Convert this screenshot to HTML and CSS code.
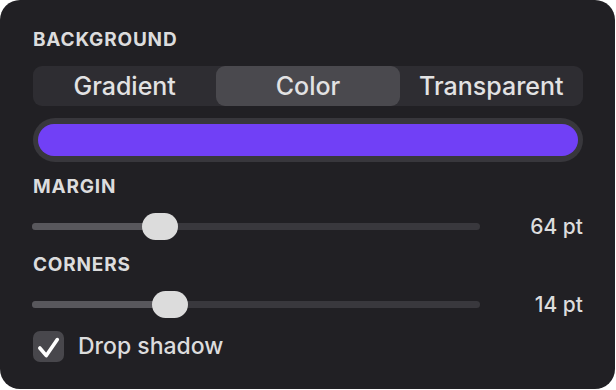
FILE: index.html
```html
<!DOCTYPE html>
<html>
<head>
<meta charset="utf-8">
<link rel="stylesheet" href="styles.css">
</head>
<body>
<div class="panel">
  <div class="label">BACKGROUND</div>
  <div class="segmented">
    <div class="seg">Gradient</div>
    <div class="seg seg-on">Color</div>
    <div class="seg">Transparent</div>
  </div>
  <div class="well"><div class="swatch"></div></div>
  <div class="label label-sp">MARGIN</div>
  <div class="slider-row">
    <div class="track">
      <div class="fill" style="width:28.6%"></div>
      <div class="thumb" style="left:28.6%"></div>
    </div>
    <div class="value">64 pt</div>
  </div>
  <div class="label label-sp">CORNERS</div>
  <div class="slider-row">
    <div class="track">
      <div class="fill" style="width:30.8%"></div>
      <div class="thumb" style="left:30.8%"></div>
    </div>
    <div class="value">14 pt</div>
  </div>
  <div class="check-row">
    <div class="checkbox">
      <svg width="31" height="31" viewBox="0 0 31 31"><path d="M6.8 17 L13.3 24.6 L24.3 8.6" fill="none" stroke="#ffffff" stroke-width="3.6" stroke-linecap="round" stroke-linejoin="round"/></svg>
    </div>
    <div class="check-label">Drop shadow</div>
  </div>
</div>
</body>
</html>
```
FILE: styles.css
```css
html, body {
  margin: 0;
  padding: 0;
  background: #ffffff;
}
body {
  font-family: Inter, "Liberation Sans", sans-serif;
}
.panel {
  box-sizing: border-box;
  width: 615px;
  height: 389px;
  border-radius: 20px;
  background: #212024;
  padding: 30px 32px 0 33px;
  display: flex;
  flex-direction: column;
}
.label {
  height: 20px;
  line-height: 20px;
  font-size: 19px;
  font-weight: 700;
  color: #dcdcdd;
  letter-spacing: 0.8px;
}
.label-sp {
  margin-top: 15px;
}
.segmented {
  margin-top: 16px;
  height: 40px;
  border-radius: 9px;
  background: #2e2d32;
  display: grid;
  grid-template-columns: 1fr 1fr 1fr;
}
.seg {
  display: flex;
  align-items: center;
  justify-content: center;
  font-size: 25px;
  font-weight: 500;
  color: #e2e2e3;
  border-radius: 9px;
}
.seg-on {
  background: #4a494e;
}
.well {
  margin-top: 12px;
  height: 44px;
  border-radius: 22px;
  background: #38373c;
  padding: 6px 5px 6px 5px;
  box-sizing: border-box;
}
.swatch {
  height: 100%;
  border-radius: 16px;
  background: #7140f6;
}
.slider-row {
  margin-top: 14px;
  height: 30px;
  display: flex;
  align-items: center;
}
.slider-row + .label-sp {
  margin-top: 14px;
}
.track {
  position: relative;
  margin-left: -1px;
  width: 448px;
  height: 7px;
  border-radius: 4px;
  background: #39383d;
}
.fill {
  height: 100%;
  border-radius: 4px 0 0 4px;
  background: #58575c;
}
.thumb {
  position: absolute;
  top: 50%;
  width: 36px;
  height: 27px;
  margin-left: -18px;
  margin-top: -13.5px;
  border-radius: 14px;
  background: #dcdcdc;
}
.value {
  flex: 1;
  text-align: right;
  font-size: 21px;
  font-weight: 500;
  color: #dcdcdd;
}
.check-row {
  margin-top: 11px;
  height: 32px;
  display: flex;
  align-items: center;
}
.checkbox {
  width: 31px;
  height: 31px;
  border-radius: 7px;
  background: #48474c;
}
.checkbox svg {
  display: block;
}
.check-label {
  margin-left: 14px;
  font-size: 23px;
  font-weight: 500;
  color: #dcdcdd;
}
```
